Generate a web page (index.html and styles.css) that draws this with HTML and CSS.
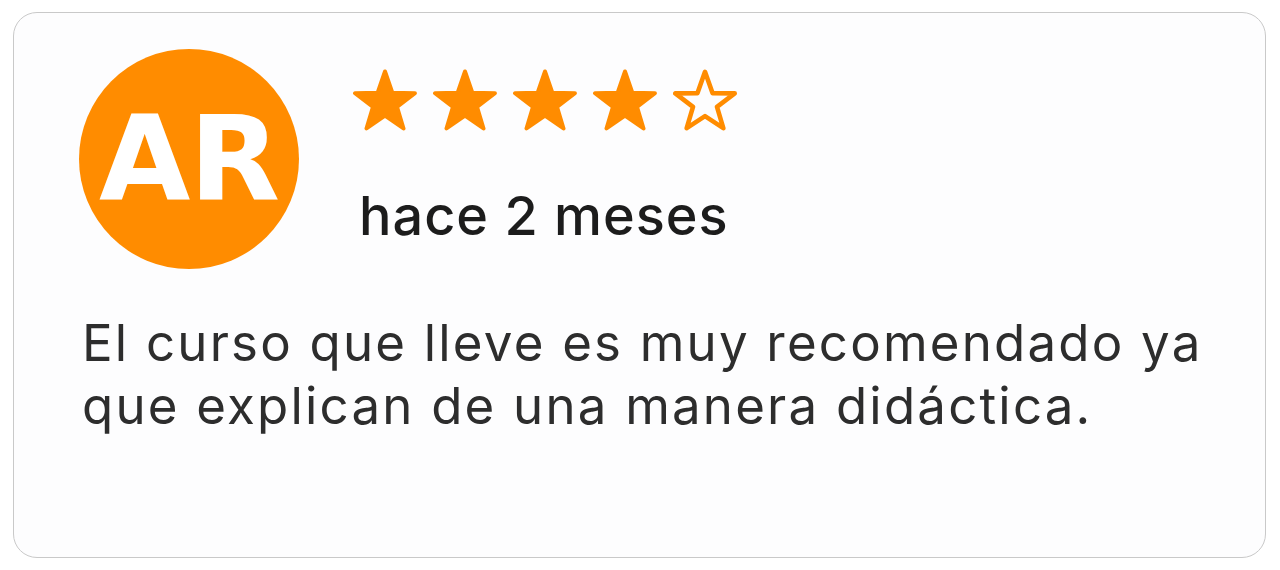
FILE: index.html
```html
<!DOCTYPE html>
<html lang="es">
<head>
    <meta charset="UTF-8">
    <meta name="viewport" content="width=device-width, initial-scale=1.0">
    <title>Opinión</title>
    <link rel="stylesheet" href="styles.css">
</head>
<body>
    <div class="review-card">
        <div class="review-head">
            <div class="avatar">AR</div>
            <div class="review-meta">
                <div class="stars">
                    <svg class="star" viewBox="-32 -34 64 62"><polygon class="full" points="0,-31.5 7.41,-10.19 29.96,-9.73 11.98,3.89 18.52,25.48 0,12.6 -18.52,25.48 -11.98,3.89 -29.96,-9.73 -7.41,-10.19"/></svg>
                    <svg class="star" viewBox="-32 -34 64 62"><polygon class="full" points="0,-31.5 7.41,-10.19 29.96,-9.73 11.98,3.89 18.52,25.48 0,12.6 -18.52,25.48 -11.98,3.89 -29.96,-9.73 -7.41,-10.19"/></svg>
                    <svg class="star" viewBox="-32 -34 64 62"><polygon class="full" points="0,-31.5 7.41,-10.19 29.96,-9.73 11.98,3.89 18.52,25.48 0,12.6 -18.52,25.48 -11.98,3.89 -29.96,-9.73 -7.41,-10.19"/></svg>
                    <svg class="star" viewBox="-32 -34 64 62"><polygon class="full" points="0,-31.5 7.41,-10.19 29.96,-9.73 11.98,3.89 18.52,25.48 0,12.6 -18.52,25.48 -11.98,3.89 -29.96,-9.73 -7.41,-10.19"/></svg>
                    <svg class="star" viewBox="-32 -34 64 62"><polygon class="empty" points="0,-31.2 7.5,-9.9 29.7,-9.6 12.0,3.9 18.3,25.2 0,13.2 -18.3,25.2 -12.0,3.9 -29.7,-9.6 -7.5,-9.9"/></svg>
                </div>
                <div class="review-date">hace 2 meses</div>
            </div>
        </div>
        <p class="review-text">El curso que lleve es muy recomendado ya que explican de una manera didáctica.</p>
    </div>
</body>
</html>
```

FILE: styles.css
```css
body { margin: 0; padding: 12px 14px 12px 13px; background-color: #fff; font-family: Inter, "Open Sans", sans-serif; }
.review-card { border: 1px solid #c9c9c9; border-radius: 24px; background-color: #fdfdfe; padding: 36px 55px 0 65px; box-sizing: border-box; height: 546px; }
.review-head { display: flex; align-items: flex-start; gap: 54px; }
.avatar { width: 220px; height: 220px; border-radius: 50%; background-color: #ff8c00; color: #fff; display: flex; align-items: center; justify-content: center; font-family: "DejaVu Sans", sans-serif; font-weight: bold; font-size: 118px; letter-spacing: -1px; flex-shrink: 0; }
.review-meta { padding-top: 20px; }
.stars { display: flex; gap: 16px; }
.star { width: 64px; height: 62px; display: block; }
.star .full { fill: #ff8c00; stroke: #ff8c00; stroke-width: 4; stroke-linejoin: round; }
.star .empty { fill: none; stroke: #ff8c00; stroke-width: 4.6; stroke-linejoin: round; }
.review-date { margin-top: 53px; margin-left: 6px; font-size: 54px; font-weight: 500; letter-spacing: 1px; color: #1c1c1c; line-height: 1.2; }
.review-text { margin: 42px 0 0 0; padding-left: 3px; font-size: 51px; letter-spacing: 2.2px; line-height: 63px; color: #2d2d2d; }
```
